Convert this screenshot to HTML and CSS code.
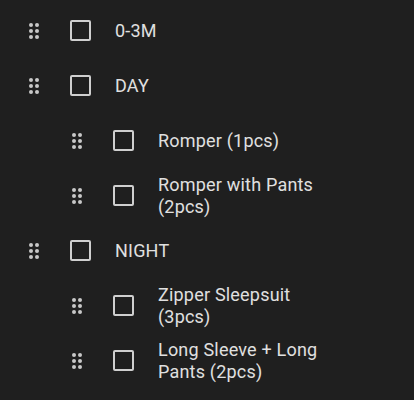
FILE: index.html
```html
<!DOCTYPE html>
<html lang="en">
<head>
<meta charset="utf-8">
<link rel="stylesheet" href="styles.css">
</head>
<body>
<ul class="list">
  <li class="row">
    <svg class="drag" viewBox="0 0 24 24"><circle cx="9" cy="6" r="2"/><circle cx="15" cy="6" r="2"/><circle cx="9" cy="12" r="2"/><circle cx="15" cy="12" r="2"/><circle cx="9" cy="18" r="2"/><circle cx="15" cy="18" r="2"/></svg>
    <span class="box"></span>
    <span class="label">0-3M</span>
  </li>
  <li class="row">
    <svg class="drag" viewBox="0 0 24 24"><circle cx="9" cy="6" r="2"/><circle cx="15" cy="6" r="2"/><circle cx="9" cy="12" r="2"/><circle cx="15" cy="12" r="2"/><circle cx="9" cy="18" r="2"/><circle cx="15" cy="18" r="2"/></svg>
    <span class="box"></span>
    <span class="label">DAY</span>
  </li>
  <li class="row child">
    <svg class="drag" viewBox="0 0 24 24"><circle cx="9" cy="6" r="2"/><circle cx="15" cy="6" r="2"/><circle cx="9" cy="12" r="2"/><circle cx="15" cy="12" r="2"/><circle cx="9" cy="18" r="2"/><circle cx="15" cy="18" r="2"/></svg>
    <span class="box"></span>
    <span class="label">Romper (1pcs)</span>
  </li>
  <li class="row child">
    <svg class="drag" viewBox="0 0 24 24"><circle cx="9" cy="6" r="2"/><circle cx="15" cy="6" r="2"/><circle cx="9" cy="12" r="2"/><circle cx="15" cy="12" r="2"/><circle cx="9" cy="18" r="2"/><circle cx="15" cy="18" r="2"/></svg>
    <span class="box"></span>
    <span class="label">Romper with Pants (2pcs)</span>
  </li>
  <li class="row">
    <svg class="drag" viewBox="0 0 24 24"><circle cx="9" cy="6" r="2"/><circle cx="15" cy="6" r="2"/><circle cx="9" cy="12" r="2"/><circle cx="15" cy="12" r="2"/><circle cx="9" cy="18" r="2"/><circle cx="15" cy="18" r="2"/></svg>
    <span class="box"></span>
    <span class="label">NIGHT</span>
  </li>
  <li class="row child">
    <svg class="drag" viewBox="0 0 24 24"><circle cx="9" cy="6" r="2"/><circle cx="15" cy="6" r="2"/><circle cx="9" cy="12" r="2"/><circle cx="15" cy="12" r="2"/><circle cx="9" cy="18" r="2"/><circle cx="15" cy="18" r="2"/></svg>
    <span class="box"></span>
    <span class="label">Zipper Sleepsuit (3pcs)</span>
  </li>
  <li class="row child">
    <svg class="drag" viewBox="0 0 24 24"><circle cx="9" cy="6" r="2"/><circle cx="15" cy="6" r="2"/><circle cx="9" cy="12" r="2"/><circle cx="15" cy="12" r="2"/><circle cx="9" cy="18" r="2"/><circle cx="15" cy="18" r="2"/></svg>
    <span class="box"></span>
    <span class="label">Long Sleeve + Long Pants (2pcs)</span>
  </li>
</ul>
</body>
</html>
```

FILE: styles.css
```css
html, body {
  margin: 0;
  padding: 0;
  background: #1f1f1f;
}
body {
  font-family: Roboto, "Noto Sans", sans-serif;
  color: #e0e0e0;
  width: 414px;
  height: 400px;
  overflow: hidden;
}
.list {
  list-style: none;
  margin: 0;
  padding: 3px 0 0 0;
}
.row {
  display: flex;
  align-items: center;
  height: 55px;
  padding: 0 78px 0 22px;
  box-sizing: border-box;
}
.row.child {
  padding-left: 65px;
}
.drag {
  width: 24px;
  height: 24px;
  flex: none;
  fill: #c8c8c8;
}
.box {
  flex: none;
  width: 21px;
  height: 21px;
  box-sizing: border-box;
  border: 2px solid #cfcfcf;
  border-radius: 2px;
  margin-left: 24px;
}
.label {
  margin-left: 24px;
  font-size: 18px;
  line-height: 22px;
  letter-spacing: 0.2px;
}
```
